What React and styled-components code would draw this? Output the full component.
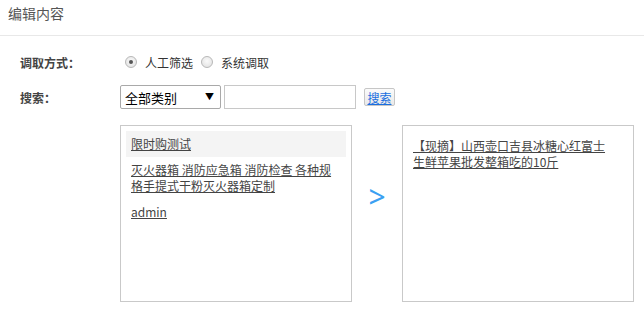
import React, { useState } from 'react';
import styled, { createGlobalStyle } from 'styled-components';

const GlobalStyle = createGlobalStyle`
  body {
    margin: 0;
    background: #ffffff;
    font-family: "Noto Sans CJK SC", "Noto Sans", "Liberation Sans", sans-serif;
    font-size: 12px;
    color: #333;
  }
`;

const sourceItems = [
  { id: 1, title: '限时购测试', active: true },
  { id: 2, title: '灭火器箱 消防应急箱 消防检查 各种规格手提式干粉灭火器箱定制' },
  { id: 3, title: 'admin' },
];

const pickedItems = [
  { id: 10, title: '【现摘】山西壶口吉县冰糖心红富士生鲜苹果批发整箱吃的10斤' },
];

function App() {
  const [mode, setMode] = useState('manual');
  const [keyword, setKeyword] = useState('');

  return (
    <Page>
      <GlobalStyle />
      <Header>编辑内容</Header>
      <Form>
        <Row>
          <Label>调取方式：</Label>
          <RadioGroup>
            <RadioLabel>
              <Radio
                type="radio"
                name="mode"
                checked={mode === 'manual'}
                onChange={() => setMode('manual')}
              />
              人工筛选
            </RadioLabel>
            <RadioLabel>
              <Radio
                type="radio"
                name="mode"
                checked={mode === 'system'}
                onChange={() => setMode('system')}
              />
              系统调取
            </RadioLabel>
          </RadioGroup>
        </Row>
        <Row>
          <Label>搜索：</Label>
          <SearchControls>
            <SelectWrap>
              <Select defaultValue="all">
                <option value="all">全部类别</option>
              </Select>
              <SelectArrow>▼</SelectArrow>
            </SelectWrap>
            <SearchInput value={keyword} onChange={(e) => setKeyword(e.target.value)} />
            <SearchButton>搜索</SearchButton>
          </SearchControls>
        </Row>
        <Transfer>
          <ListBox>
            {sourceItems.map((item) => (
              <Item key={item.id} $active={item.active}>
                <ItemLink>{item.title}</ItemLink>
              </Item>
            ))}
          </ListBox>
          <Arrow>&gt;</Arrow>
          <ListBox $picked>
            {pickedItems.map((item) => (
              <Item key={item.id} $picked>
                <ItemLink>{item.title}</ItemLink>
              </Item>
            ))}
          </ListBox>
        </Transfer>
      </Form>
    </Page>
  );
}

const Page = styled.div`
  width: 644px;
  height: 311px;
  overflow: hidden;
`;

const Header = styled.div`
  height: 35px;
  line-height: 26px;
  padding-left: 8px;
  font-size: 14px;
  color: #555;
  border-bottom: 1px solid #e8e8e8;
`;

const Form = styled.div`
  padding: 14px 0 0 20px;
`;

const Row = styled.div`
  display: flex;
  align-items: center;
  height: 24px;
  margin-bottom: 11px;
`;

const Label = styled.div`
  width: 100px;
  font-weight: bold;
  color: #444;
`;

const RadioGroup = styled.div`
  display: flex;
  align-items: center;
  gap: 8px;
  padding-left: 5px;
`;

const RadioLabel = styled.label`
  display: flex;
  align-items: center;
  gap: 8px;
  color: #333;
`;

const Radio = styled.input`
  appearance: none;
  margin: 0;
  width: 12px;
  height: 12px;
  border-radius: 50%;
  border: 1px solid #b8b8b8;
  background: radial-gradient(circle at 50% 40%, #fafafa, #dedede);
  position: relative;
  &:checked::after {
    content: '';
    position: absolute;
    left: 3px;
    top: 3px;
    width: 4px;
    height: 4px;
    border-radius: 50%;
    background: #555;
  }
`;

const SearchControls = styled.div`
  display: flex;
  align-items: center;
`;

const SelectWrap = styled.div`
  position: relative;
  width: 101px;
  height: 24px;
`;

const Select = styled.select`
  appearance: none;
  width: 100%;
  height: 100%;
  box-sizing: border-box;
  border: 1px solid #a9a9a9;
  border-radius: 2px;
  background: #fff;
  padding: 0 0 0 4px;
  font-family: inherit;
  font-size: 13px;
  color: #000;
`;

const SelectArrow = styled.span`
  position: absolute;
  right: 7px;
  top: 5px;
  font-size: 9px;
  color: #000;
  pointer-events: none;
`;

const SearchInput = styled.input`
  margin-left: 3px;
  width: 132px;
  height: 24px;
  box-sizing: border-box;
  border: 1px solid #c8c8c8;
  outline: none;
  padding: 0 4px;
`;

const SearchButton = styled.button`
  margin-left: 8px;
  width: 31px;
  height: 18px;
  padding: 0;
  border: 1px solid #c6c6c6;
  border-radius: 2px;
  background: linear-gradient(#fbfbfb, #e9e9e9);
  font-family: inherit;
  font-size: 12px;
  color: #1a6fe0;
  text-decoration: underline;
  line-height: 15px;
`;

const Transfer = styled.div`
  display: flex;
  align-items: flex-start;
  margin: 16px 0 0 100px;
`;

const ListBox = styled.div`
  width: 232px;
  height: 177px;
  box-sizing: border-box;
  border: 1px solid #c9c9c9;
  padding: ${(p) => (p.$picked ? '7px 5px 5px' : '5px')};
`;

const Item = styled.div`
  padding: ${(p) => (p.$picked ? '5px 14px 5px 5px' : '5px')};
  line-height: 16px;
  background: ${(p) => (p.$active ? '#f4f4f4' : 'transparent')};
`;

const ItemLink = styled.a`
  color: #444;
  text-decoration: underline;
  cursor: pointer;
`;

const Arrow = styled.div`
  width: 50px;
  margin-top: 52px;
  text-align: center;
  font-family: "Noto Sans", sans-serif;
  font-size: 30px;
  line-height: 40px;
  color: #3ba0f2;
`;

export default App;
